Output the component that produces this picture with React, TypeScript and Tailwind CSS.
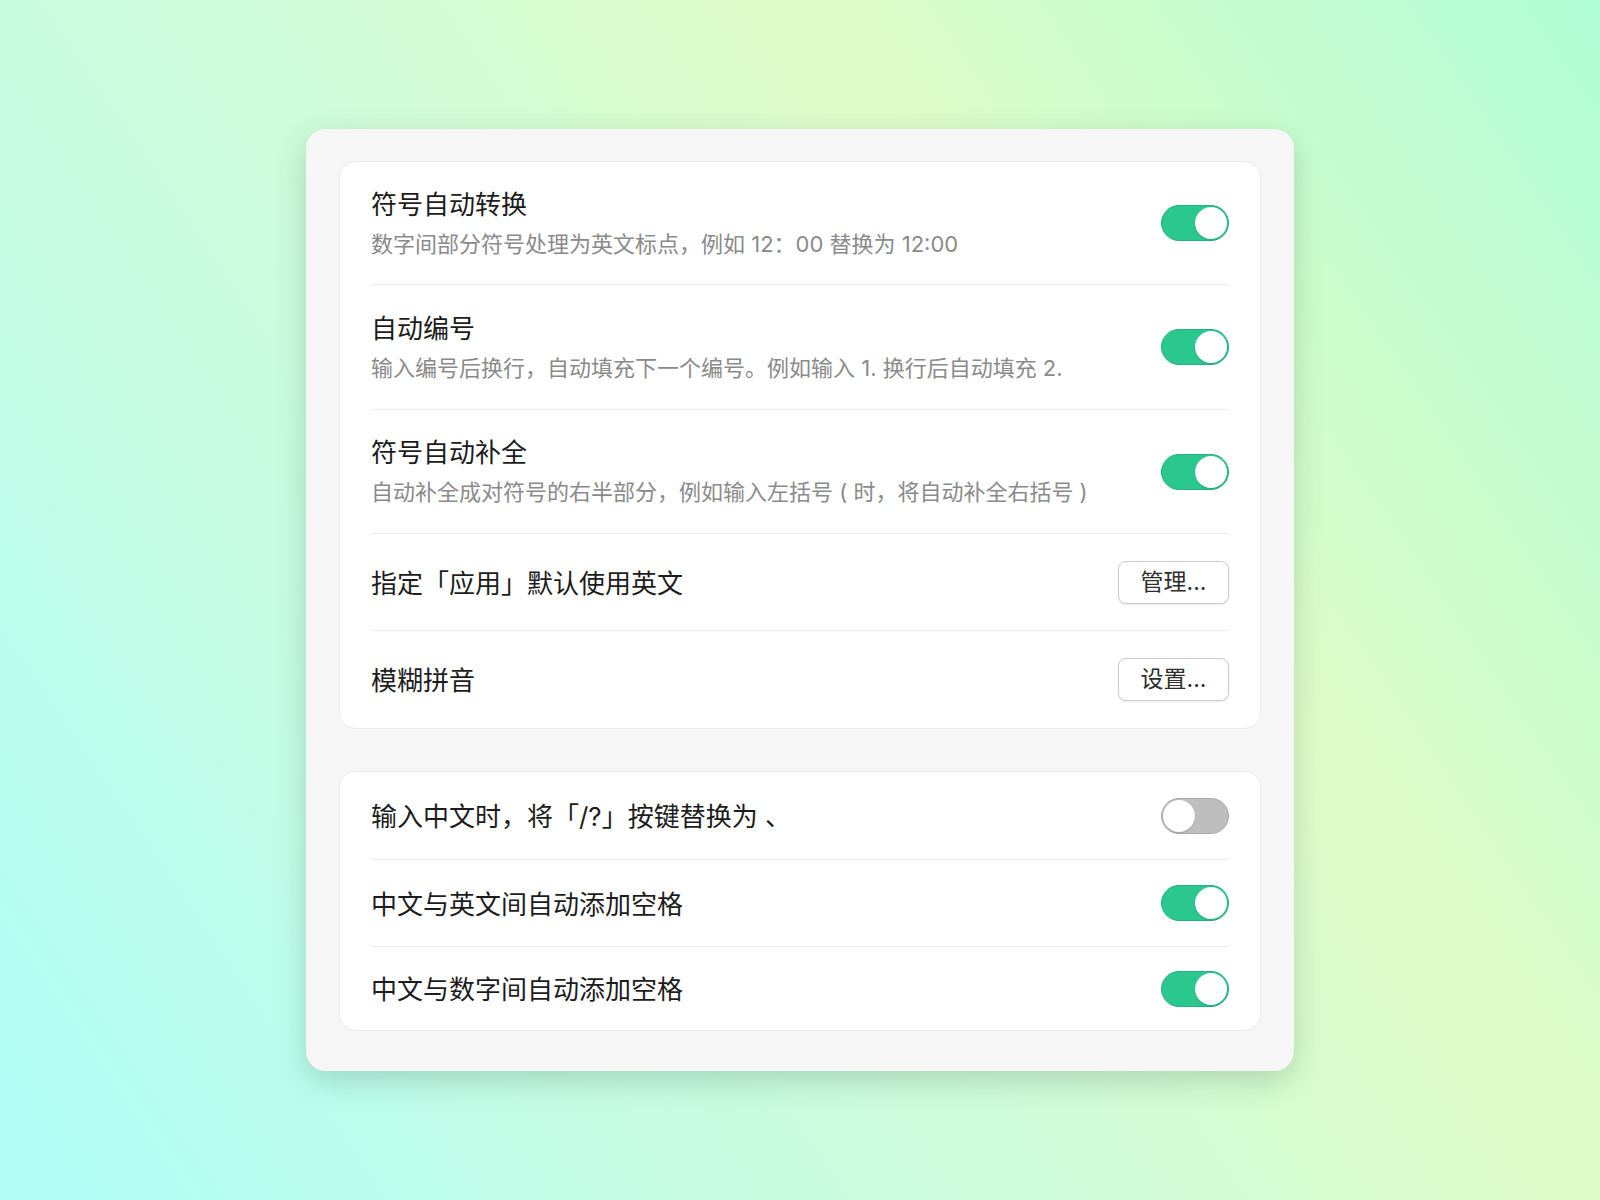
import React from "react";

const FONT = {
  fontFamily: 'Inter, "Noto Sans CJK SC", "Noto Sans", sans-serif',
};

function Toggle({ on }: { on: boolean }) {
  return on ? (
    <div className="relative h-[36px] w-[68px] shrink-0 rounded-full border border-[#23b27f] bg-[#2ac78e]">
      <div className="absolute right-[1px] top-[1px] h-[32px] w-[32px] rounded-full bg-white shadow-[0_1px_2px_rgba(0,0,0,0.15)]" />
    </div>
  ) : (
    <div className="relative h-[36px] w-[68px] shrink-0 rounded-full border border-[#a9a9a9] bg-[#bebebe]">
      <div className="absolute left-[1px] top-[1px] h-[32px] w-[32px] rounded-full bg-white shadow-[0_1px_2px_rgba(0,0,0,0.15)]" />
    </div>
  );
}

function Btn({ label }: { label: string }) {
  return (
    <div className="flex h-[43px] w-[111px] shrink-0 items-center justify-center rounded-[8px] border border-[#cbcbcb] bg-white text-[23px] leading-none text-[#2e2e2e] shadow-[0_1px_2px_rgba(0,0,0,0.08)]">
      {label}
    </div>
  );
}

function Divider() {
  return <div className="mx-[32px] h-px bg-[#ececec]" />;
}

function Row({
  h,
  title,
  desc,
  right,
}: {
  h: string;
  title: string;
  desc?: string;
  right: React.ReactNode;
}) {
  return (
    <div className={`flex items-center justify-between px-[31px] ${h}`}>
      <div className={`flex flex-col gap-[7px] ${desc ? "" : "pt-[3px]"}`}>
        <div className="text-[26px] leading-[34px] text-[#1c1c1c]">{title}</div>
        {desc && (
          <div className="text-[22px] leading-[30px] text-[#8a8a8a]">{desc}</div>
        )}
      </div>
      {right}
    </div>
  );
}

export default function App() {
  return (
    <div
      style={FONT}
      className="flex h-[1200px] w-full items-center justify-center bg-[linear-gradient(56deg,#b0fef8_0%,#c8fce0_33%,#defcc8_67%,#b0fdd4_100%)]"
    >
      <div className="w-[988px] rounded-[20px] bg-[#f6f6f6] px-[33px] pb-[40px] pt-[32px] shadow-[0_10px_30px_rgba(40,80,60,0.22)]">
        <div className="rounded-[16px] border border-[#ebebeb] bg-white">
          <Row
            h="h-[122px]"
            title="符号自动转换"
            desc="数字间部分符号处理为英文标点，例如 12：00 替换为 12:00"
            right={<Toggle on />}
          />
          <Divider />
          <Row
            h="h-[124px]"
            title="自动编号"
            desc="输入编号后换行，自动填充下一个编号。例如输入 1. 换行后自动填充 2."
            right={<Toggle on />}
          />
          <Divider />
          <Row
            h="h-[123px]"
            title="符号自动补全"
            desc="自动补全成对符号的右半部分，例如输入左括号 ( 时，将自动补全右括号 )"
            right={<Toggle on />}
          />
          <Divider />
          <Row h="h-[96px]" title="指定「应用」默认使用英文" right={<Btn label="管理..." />} />
          <Divider />
          <Row h="h-[97px]" title="模糊拼音" right={<Btn label="设置..." />} />
        </div>

        <div className="mt-[42px] rounded-[16px] border border-[#ebebeb] bg-white">
          <Row
            h="h-[87px]"
            title="输入中文时，将「/?」按键替换为 、"
            right={<Toggle on={false} />}
          />
          <Divider />
          <Row h="h-[86px]" title="中文与英文间自动添加空格" right={<Toggle on />} />
          <Divider />
          <Row h="h-[83px]" title="中文与数字间自动添加空格" right={<Toggle on />} />
        </div>
      </div>
    </div>
  );
}
